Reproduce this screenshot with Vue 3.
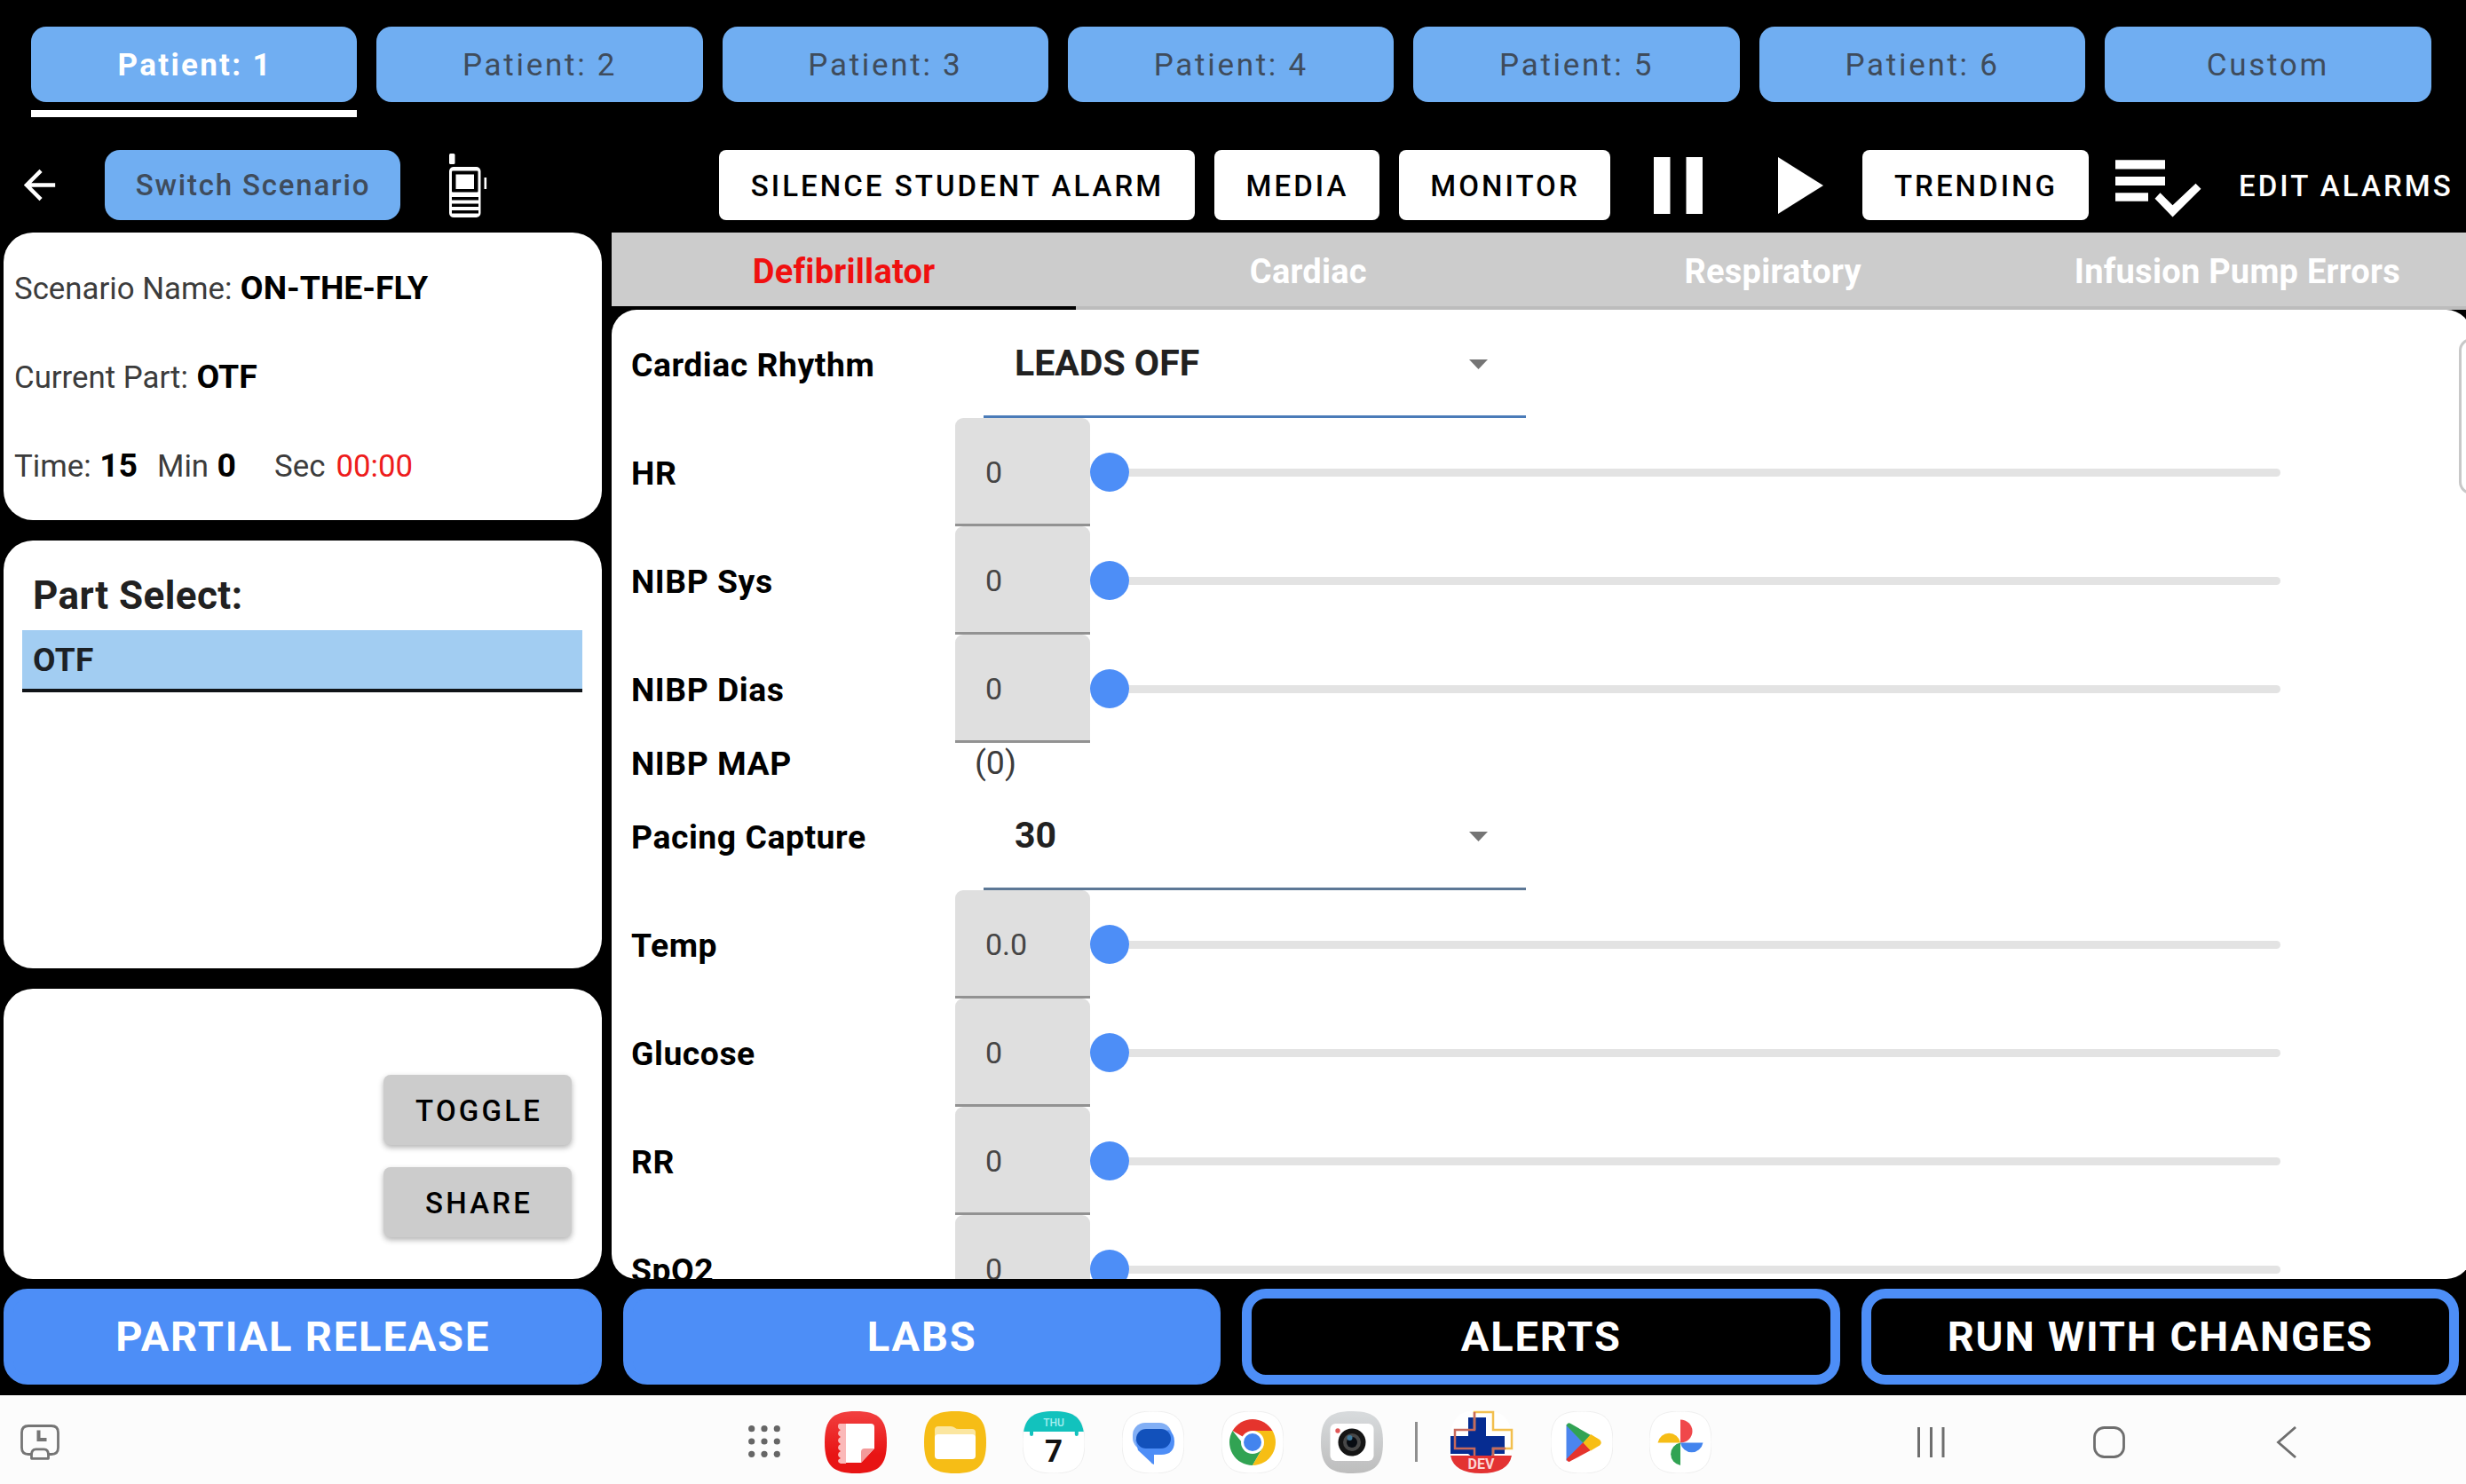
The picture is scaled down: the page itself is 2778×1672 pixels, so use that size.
<script setup>
import { ref } from 'vue';

const patients = ['Patient: 1', 'Patient: 2', 'Patient: 3', 'Patient: 4', 'Patient: 5', 'Patient: 6', 'Custom'];
const activePatient = ref(0);

const tabs = ['Defibrillator', 'Cardiac', 'Respiratory', 'Infusion Pump Errors'];
const activeTab = ref(0);

const rows = [
  { label: 'Cardiac Rhythm', type: 'select', value: 'LEADS OFF', focused: true },
  { label: 'HR', type: 'range', value: '0' },
  { label: 'NIBP Sys', type: 'range', value: '0' },
  { label: 'NIBP Dias', type: 'range', value: '0' },
  { label: 'NIBP MAP', type: 'text', value: '(0)' },
  { label: 'Pacing Capture', type: 'select', value: '30' },
  { label: 'Temp', type: 'range', value: '0.0' },
  { label: 'Glucose', type: 'range', value: '0' },
  { label: 'RR', type: 'range', value: '0' },
  { label: 'SpO2', type: 'range', value: '0' }
];
</script>

<template>
  <div class="screen">
    <nav class="patients">
      <div v-for="(name, i) in patients" :key="name" class="patient" :class="{ active: i === activePatient }">
        <button class="patient-button" @click="activePatient = i">{{ name }}</button>
        <div class="patient-line"></div>
      </div>
    </nav>

    <header class="toolbar">
      <svg class="back" viewBox="0 0 24 24">
        <path d="M20 11H7.83l5.59-5.59L12 4l-8 8 8 8 1.41-1.41L7.83 13H20v-2z" fill="#fff" />
      </svg>
      <button class="switch">Switch Scenario</button>
      <svg class="radio" viewBox="0 0 43 72">
        <rect x="0" y="0" width="6.5" height="12" rx="1.5" fill="#fff" />
        <rect x="0" y="15" width="35.5" height="57" rx="5" fill="#fff" />
        <rect x="3" y="19.5" width="29.5" height="24" rx="1" fill="#000" />
        <rect x="7.5" y="23.5" width="20.5" height="16.5" fill="#fff" />
        <path d="M3 49h30v3.6H3zM3 56.5h30v3.6H3zM3 64h30v3.6H3z" fill="#000" />
        <rect x="39.5" y="27" width="2.6" height="13" fill="#fff" />
      </svg>
      <button class="tool silence">SILENCE STUDENT ALARM</button>
      <button class="tool media">MEDIA</button>
      <button class="tool monitor">MONITOR</button>
      <svg class="pause" viewBox="0 0 55 64">
        <path d="M0 0h18.5v64H0zM36.5 0H55v64H36.5z" fill="#fff" />
      </svg>
      <svg class="play" viewBox="0 0 51 64">
        <path d="M0 0l51 32L0 64z" fill="#fff" />
      </svg>
      <button class="tool trending">TRENDING</button>
      <svg class="checklist" viewBox="0 0 97 65">
        <path d="M0 .3h56v10.2H0zM0 19h56v10H0zM0 37.3h37v9.4H0z" fill="#fff" />
        <path d="M44.5 43.7l6-6.4 14 14 26-24.6 6 6L64.5 64.6z" fill="#fff" />
      </svg>
      <span class="edit">EDIT ALARMS</span>
    </header>

    <main class="content">
      <aside class="side">
        <section class="card info">
          <p><span>Scenario Name:</span><b>ON-THE-FLY</b></p>
          <p><span>Current Part:</span><b>OTF</b></p>
          <p>
            <span>Time:</span><b>15</b><span class="min">Min</span><b>0</b><span class="sec">Sec</span><span class="clock">00:00</span>
          </p>
        </section>
        <section class="card parts">
          <h2>Part Select:</h2>
          <div class="part">OTF</div>
        </section>
        <section class="card actions">
          <button class="action">TOGGLE</button>
          <button class="action">SHARE</button>
        </section>
      </aside>

      <section class="editor">
        <div class="tabs">
          <button
            v-for="(tab, i) in tabs"
            :key="tab"
            class="tab"
            :class="{ active: i === activeTab }"
            @click="activeTab = i"
          >{{ tab }}</button>
        </div>
        <div class="panel">
          <div v-for="row in rows" :key="row.label" class="row" :class="row.type">
            <div class="label">{{ row.label }}</div>
            <div v-if="row.type === 'select'" class="spinner" :class="{ focused: row.focused }">
              <span>{{ row.value }}</span>
              <svg class="caret" viewBox="0 0 21 11"><path d="M0 0h21L10.5 11z" fill="#757575" /></svg>
            </div>
            <template v-else-if="row.type === 'range'">
              <div class="field">{{ row.value }}</div>
              <div class="slider">
                <div class="thumb"></div>
                <div class="track"></div>
              </div>
            </template>
            <div v-else class="plain">{{ row.value }}</div>
          </div>
          <div class="scroll-handle"></div>
        </div>
      </section>
    </main>

    <footer class="bottom">
      <button class="big">PARTIAL RELEASE</button>
      <button class="big">LABS</button>
      <button class="big outline">ALERTS</button>
      <button class="big outline">RUN WITH CHANGES</button>
    </footer>

    <div class="taskbar">
      <svg class="recent" viewBox="0 0 44 40" fill="none" stroke="#757575" stroke-width="2.8">
        <path d="M12 33.500H9q-7.500 0-7.500-7.500V9Q1.500 1.500 9 1.500h26q7.500 0 7.500 7.500v17q0 7.500-7.500 7.500h-3" />
        <path d="M12.500 38.300v-4q0-6.500 5-6.500h9q5 0 5 6.500v4z" stroke-linejoin="round" />
        <path d="M20.500 6.500v10.500h9" stroke-width="4" />
      </svg>
      <svg class="drawer" viewBox="0 0 36 36" fill="#666">
        <template v-for="y in 3" :key="y">
          <circle v-for="x in 3" :key="x" :cx="x * 14.3 - 10.6" :cy="y * 14.3 - 10.6" r="3.6" />
        </template>
      </svg>

      <!-- Notes -->
      <svg class="app" viewBox="0 0 70 70">
        <defs>
          <linearGradient id="notes" x1="0" y1="0" x2="0" y2="1">
            <stop offset="0" stop-color="#f24040" />
            <stop offset=".7" stop-color="#e81414" />
          </linearGradient>
        </defs>
        <path d="M35 0C61 0 70 9 70 35S61 70 35 70 0 61 0 35 9 0 35 0z" fill="url(#notes)" />
        <path d="M24 14h-7q-2 0-2 3t3 4q-3 1.500-3 4t3 4q-3 1.500-3 4t3 4q-3 1.500-3 4t3 4q-3 1.500-3 4t3 4q-3 1-3 3t3 3h6z" fill="#fbb9b9" />
        <path d="M24 14h28q4 0 4 4v24L41 58H24z" fill="#fff" />
        <path d="M41 58V46q0-4 4-4h11z" fill="#f39a9a" />
      </svg>
      <!-- Files -->
      <svg class="app" viewBox="0 0 70 70">
        <path d="M35 0C61 0 70 9 70 35S61 70 35 70 0 61 0 35 9 0 35 0z" fill="#f6bd16" />
        <path d="M12 21q0-4 4-4h14q3 0 4.500 1.500T39 20h15q4 0 4 4v8H12z" fill="#fbe6a0" />
        <rect x="12" y="26" width="46" height="28" rx="4" fill="#fff" />
      </svg>
      <!-- Calendar -->
      <svg class="app" viewBox="0 0 70 70">
        <path class="plate" d="M35 0C61 0 70 9 70 35S61 70 35 70 0 61 0 35 9 0 35 0z" />
        <path d="M1.200 23C4 6 14 0 35 0s31 6 33.800 23h-6v3q0 2-2 2t-2-2v-3H12v3q0 2-2 2t-2-2v-3z" fill="#12c2bd" />
        <text x="35" y="17" font-size="12" font-weight="500" fill="#a5eef0" text-anchor="middle">THU</text>
        <text x="35" y="57" font-size="35" font-weight="700" fill="#111" text-anchor="middle">7</text>
      </svg>
      <!-- Messages -->
      <svg class="app" viewBox="0 0 70 70">
        <path class="plate" d="M35 0C61 0 70 9 70 35S61 70 35 70 0 61 0 35 9 0 35 0z" />
        <rect x="12" y="13" width="44" height="31" rx="14" fill="#82aff5" />
        <path d="M15 32l38-11q6 5 6 13 0 15-15 15h-8v11q-2 0-4-3L18 44z" fill="#4e8ef7" />
        <rect x="16" y="20" width="39" height="22" rx="11" fill="#1251bb" />
      </svg>
      <!-- Chrome -->
      <svg class="app" viewBox="0 0 70 70">
        <path class="plate" d="M35 0C61 0 70 9 70 35S61 70 35 70 0 61 0 35 9 0 35 0z" />
        <path d="M35 35L12.500 22A26 26 0 0 1 57.500 22z" fill="#e5342d" />
        <path d="M35 35h-12L12.500 22A26 26 0 0 0 35 61l11-19z" fill="#31a353" />
        <path d="M35 22h22.500A26 26 0 0 1 35 61L46.500 41z" fill="#f7be14" />
        <circle cx="35" cy="35" r="13" fill="#fff" />
        <circle cx="35" cy="35" r="10" fill="#4384ee" />
      </svg>
      <!-- Camera -->
      <svg class="app" viewBox="0 0 70 70">
        <defs>
          <linearGradient id="camera" x1="0" y1="0" x2="0" y2="1">
            <stop offset="0" stop-color="#d8dbdd" />
            <stop offset="1" stop-color="#bdbdbd" />
          </linearGradient>
        </defs>
        <path d="M35 0C61 0 70 9 70 35S61 70 35 70 0 61 0 35 9 0 35 0z" fill="url(#camera)" />
        <rect x="10.5" y="14" width="49" height="42" rx="6" fill="#fff" />
        <circle cx="19" cy="22" r="2.7" fill="#e05858" />
        <circle cx="35" cy="35" r="15.5" fill="#151515" />
        <circle cx="35" cy="35" r="10" fill="#484848" />
        <circle cx="35" cy="35" r="6" fill="#080c12" />
        <circle cx="32.5" cy="30" r="3" fill="#3f7899" />
      </svg>
      <div class="divider"></div>
      <!-- Simulator (dev build) -->
      <svg class="app dev" viewBox="0 0 72 72">
        <path d="M35 0C61 0 70 9 70 35S61 70 35 70 1 61 1 35 9 0 35 0z" fill="#fff" />
        <path d="M21 8h20v21h21v20H49l-5 5H27l-6-5H1V29h20z" fill="#062c91" />
        <path d="M28 22V2h21v20h21v21H49v9" fill="none" stroke="#f2bf4e" stroke-width="2.5" />
        <path d="M28 2v20H6v21h22v9M49 52v-9h14" fill="none" stroke="#c8695b" stroke-width="2.5" />
        <path d="M1 51h69Q66 71 35.500 71T1 51z" fill="#e33232" />
        <text x="35.5" y="66" font-size="16" font-weight="700" fill="#fbd5d5" text-anchor="middle">DEV</text>
      </svg>
      <!-- Play Store -->
      <svg class="app" viewBox="0 0 70 70">
        <path class="plate" d="M35 0C61 0 70 9 70 35S61 70 35 70 0 61 0 35 9 0 35 0z" />
        <path d="M17.500 15v41l19-20.500z" fill="#4b85ee" />
        <path d="M17.500 16q1.500-4 5-2L45 27l-8.500 9z" fill="#31a353" />
        <path d="M17.500 54q1.500 4.500 5 2L45 44l-8.500-9z" fill="#e5342d" />
        <path d="M45 26l10 6q3.500 3.500 0 6.500l-10 6-8.500-9z" fill="#f7be14" />
      </svg>
      <!-- Photos -->
      <svg class="app" viewBox="0 0 70 70">
        <path class="plate" d="M35 0C61 0 70 9 70 35S61 70 35 70 0 61 0 35 9 0 35 0z" />
        <path d="M35 9.500A13.500 13 0 0 1 35 35.500z" fill="#f0484b" />
        <path d="M9.500 35.500A13 13.500 0 0 1 35 35.500z" fill="#f6bd16" />
        <path d="M35 35.500A13.500 13 0 0 0 35 61z" fill="#31a353" />
        <path d="M35 35.500A13 13.500 0 0 0 60.500 35.500z" fill="#4384ee" />
      </svg>

      <svg class="nav recents" viewBox="0 0 36 36" stroke="#6e6e6e" stroke-width="3">
        <path d="M4.500 1v34M18.500 1v34M32 1v34" />
      </svg>
      <svg class="nav home" viewBox="0 0 36 36" fill="none" stroke="#6e6e6e" stroke-width="2.8">
        <rect x="1.5" y="1.5" width="33" height="33" rx="11" />
      </svg>
      <svg class="nav prev" viewBox="0 0 36 36" fill="none" stroke="#6e6e6e" stroke-width="2.8">
        <path d="M28 1L8.500 18 28 35" />
      </svg>
    </div>
  </div>
</template>

<style>
body {
  background: #000;
  overflow: hidden;
}
</style>

<style scoped>
.screen {
  width: 2778px;
  height: 1672px;
  display: flex;
  flex-direction: column;
  overflow: hidden;
  background: #000;
  font-family: Roboto, "Liberation Sans", sans-serif;
  color: #000;
}

.screen * {
  box-sizing: border-box;
}

svg {
  display: block;
  flex: none;
}

button {
  border: none;
  padding: 0;
  margin: 0;
  font: inherit;
  color: inherit;
  letter-spacing: inherit;
  white-space: nowrap;
}

.patients {
  height: 132px;
  padding: 30px 39.5px 0 35px;
  display: flex;
  gap: 22px;
}

.patient {
  flex: 1;
  display: flex;
  flex-direction: column;
  gap: 9px;
}

.patient-button {
  height: 85px;
  padding-top: 2px;
  border-radius: 17px;
  background: #70aef2;
  color: #3f4c5c;
  font-size: 35px;
  letter-spacing: 2.7px;
}

.patient-line {
  height: 8px;
}

.active .patient-button {
  color: #fff;
  font-weight: 700;
  letter-spacing: 2.3px;
  text-indent: 2px;
}

.active .patient-line {
  background: #fff;
}

.toolbar {
  height: 130px;
  padding: 37px 0 14px 18px;
  display: flex;
  align-items: center;
  font-size: 33px;
  font-weight: 500;
  letter-spacing: 3.05px;
}

.back {
  width: 53px;
  height: 53px;
}

.switch {
  width: 333px;
  height: 79px;
  margin-left: 47px;
  border-radius: 17px;
  background: #70aef2;
  color: #3f4c5c;
  letter-spacing: 1.8px;
  text-indent: 1px;
}

.radio {
  width: 43px;
  height: 72px;
  margin-left: 55px;
}

.tool {
  height: 79px;
  padding-top: 1px;
  border-radius: 8px;
  background: #fff;
  text-indent: 1px;
}

.silence {
  width: 536px;
  margin-left: 261px;
}

.media {
  width: 186px;
  margin-left: 22px;
}

.monitor {
  width: 238px;
  margin-left: 22px;
}

.pause {
  width: 55px;
  height: 64px;
  margin-left: 49px;
}

.play {
  width: 51px;
  height: 64px;
  margin-left: 85px;
}

.trending {
  width: 255px;
  margin-left: 44px;
}

.checklist {
  width: 97px;
  height: 65px;
  margin: 7px 0 0 30px;
}

.edit {
  margin-left: 42px;
  padding-top: 1px;
  color: #fff;
  white-space: nowrap;
}

.content {
  height: 1179px;
  display: flex;
  gap: 11px;
}

.side {
  width: 678px;
  padding: 0 0 0 4px;
  display: flex;
  flex-direction: column;
  gap: 23px;
}

.card {
  background: #fff;
  border-radius: 33px;
}

.info {
  height: 324px;
  padding: 13px 12px;
  font-size: 34.8px;
  color: #3c3c3c;
}

.info p {
  margin: 0;
  height: 100px;
  display: flex;
  align-items: baseline;
  line-height: 99px;
  white-space: nowrap;
}

.info b {
  margin-left: 9.5px;
  color: #000;
  font-size: 37.4px;
}

.info .min {
  margin-left: 22px;
}

.info .sec {
  margin-left: 43px;
}

.info .clock {
  margin-left: 12px;
  color: #ee1c1c;
}

.parts {
  height: 482px;
  padding: 32px 22px 0 21px;
}

.parts h2 {
  margin: 0;
  padding-left: 12px;
  height: 69px;
  font-size: 44px;
  line-height: 60px;
  font-weight: 700;
  letter-spacing: 0.45px;
  color: #212121;
}

.part {
  height: 70px;
  padding-left: 12px;
  border-bottom: 4px solid #101418;
  background: #a2cdf2;
  color: #1c2126;
  font-size: 37px;
  font-weight: 700;
  letter-spacing: 0.4px;
  line-height: 67px;
}

.actions {
  height: 327px;
  padding: 97px 34px 0 0;
  display: flex;
  flex-direction: column;
  align-items: flex-end;
  gap: 25px;
}

.action {
  width: 212px;
  height: 79px;
  padding-top: 1px;
  border-radius: 8px;
  background: #ccc;
  box-shadow: 0 3px 6px rgba(0, 0, 0, 0.3);
  font-size: 33px;
  font-weight: 500;
  letter-spacing: 3.2px;
  text-indent: 3.2px;
}

.editor {
  width: 2089px;
  display: flex;
  flex-direction: column;
  overflow: hidden;
}

.tabs {
  width: 2093px;
  height: 87px;
  display: flex;
}

.tab {
  flex: 1;
  padding-top: 5px;
  border-bottom: 4px solid #bcbcbc;
  background: #ccc;
  color: #fff;
  font-size: 38px;
  font-weight: 700;
  letter-spacing: 0.25px;
}

.tab.active {
  border-color: #000;
  color: #f01010;
}

.panel {
  position: relative;
  width: 2095px;
  height: 1092px;
  border-radius: 28px;
  background: #fff;
  overflow: hidden;
}

.row {
  height: 122px;
  padding-left: 22px;
  display: flex;
  align-items: center;
}

.row.text {
  height: 44px;
}

.label {
  width: 365px;
  padding-top: 1px;
  font-size: 37.3px;
  font-weight: 700;
  letter-spacing: 0.55px;
}

.spinner {
  width: 611px;
  height: 122px;
  margin-left: 32px;
  padding: 0 43px 0 35px;
  display: flex;
  align-items: center;
  justify-content: space-between;
  border-bottom: 3px solid #5d7896;
  font-size: 41px;
  font-weight: 700;
  color: #212121;
}

.spinner.focused {
  border-color: #4a7bb8;
}

.caret {
  width: 21px;
  height: 11px;
  margin-top: 4px;
}

.field {
  width: 152px;
  height: 122px;
  padding-left: 34px;
  border-bottom: 3px solid #929292;
  border-radius: 9px 9px 0 0;
  background: #dfdfdf;
  color: #454545;
  font-size: 34px;
  line-height: 123px;
}

.slider {
  width: 1341px;
  display: flex;
  align-items: center;
}

.thumb {
  width: 44px;
  height: 44px;
  border-radius: 50%;
  background: #4d8ef7;
}

.track {
  flex: 1;
  height: 9px;
  border-radius: 0 5px 5px 0;
  background: #e3e3e3;
}

.plain {
  padding-left: 22px;
  font-size: 37.5px;
  color: #3c3c3c;
}

/* the handle of the scroll view, it runs off the right edge */
.scroll-handle {
  position: absolute;
  top: 32px;
  right: -20px;
  width: 34px;
  height: 176px;
  border: 3px solid #c8c8c8;
  border-radius: 14px;
}

.bottom {
  height: 131px;
  padding: 11px 8px 12px 4px;
  display: flex;
  gap: 24px;
}

.big {
  flex: 1;
  padding-bottom: 2px;
  border: 11px solid #4d8ef7;
  border-radius: 27px;
  background: #4d8ef7;
  color: #fff;
  font-size: 47px;
  font-weight: 700;
  letter-spacing: 1.85px;
  text-indent: 1px;
}

.big.outline {
  background: #000;
}

.taskbar {
  height: 100px;
  padding-left: 23px;
  display: flex;
  align-items: center;
  background: #fcfcfc;
}

.taskbar text {
  font-family: Roboto, sans-serif;
}

.recent {
  width: 44px;
  height: 40px;
  margin-top: 5px;
}

.drawer {
  width: 36px;
  height: 36px;
  margin: 4px 8px 0 776px;
}

.app {
  width: 70px;
  height: 70px;
  margin: 5px 0 0 41.8px;
}

.plate {
  fill: #fff;
  stroke: #efefef;
  stroke-width: 1;
}

.divider {
  width: 3px;
  height: 45px;
  margin: 4px 0 0 36px;
  background: #8f8f8f;
}

.app.dev {
  width: 72px;
  height: 72px;
  margin-left: 36px;
}

.nav {
  width: 36px;
  height: 36px;
  margin-top: 5px;
}

.recents {
  margin-left: 228.5px;
}

.home {
  margin-left: 165px;
}

.prev {
  margin-left: 164px;
}
</style>
